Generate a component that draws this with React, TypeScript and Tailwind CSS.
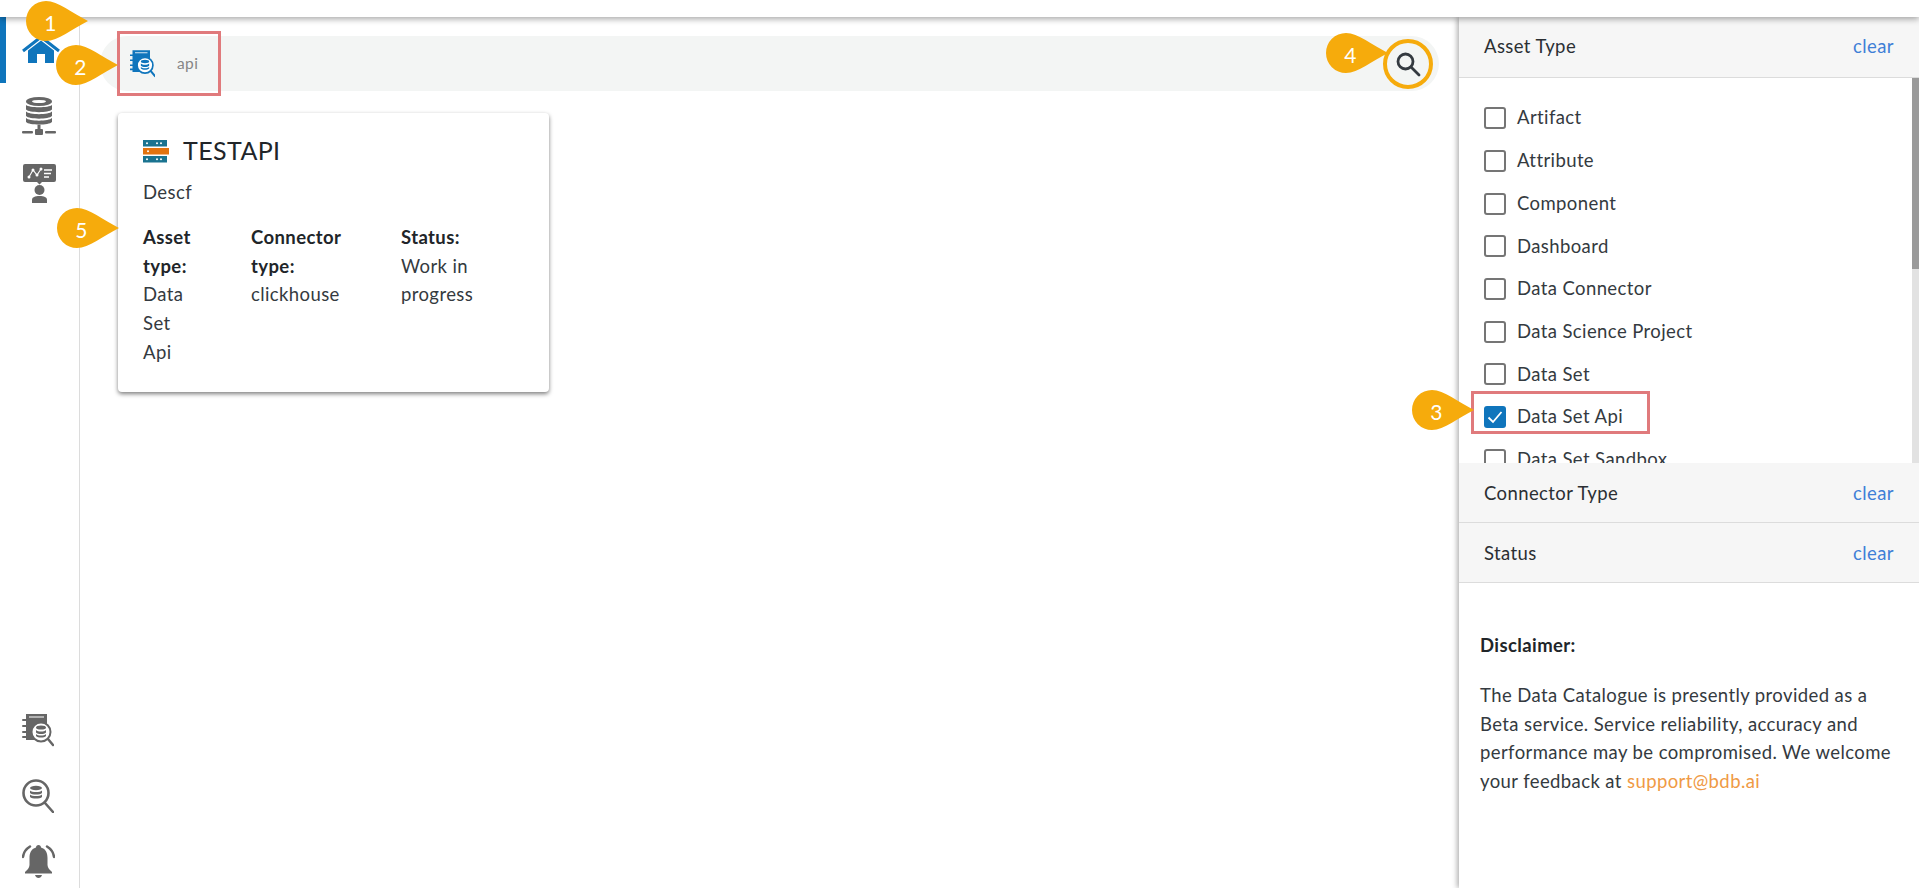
import React from "react";

const font = { fontFamily: '"Lato", "Noto Sans", sans-serif', letterSpacing: "0.4px" };

function Callout({ n, className }: { n: number; className: string }) {
  return (
    <div className={`absolute w-[62px] h-[40px] z-30 ${className}`}>
      <svg width="62" height="40" viewBox="0 0 62 40" className="absolute left-0 top-0">
        <path d="M20 0C32 0 46 12 62 20C46 28 32 40 20 40A20 20 0 0 1 20 0Z" fill="#f6ab0c" />
      </svg>
      <span className="absolute left-0 top-0 w-[49px] h-[42px] flex items-center justify-center text-white text-[21px] leading-none">
        {n}
      </span>
    </div>
  );
}

function Home() {
  return (
    <svg width="38" height="30" viewBox="0 0 38 30">
      <path d="M1 16L19 2L37 16" fill="none" stroke="#0f75bc" strokeWidth="3" />
      <path d="M6 15.500L19 5.500L32 15.500V28H23V19H15V28H6Z" fill="#0f75bc" />
    </svg>
  );
}

function DbServer() {
  return (
    <svg width="34" height="39" viewBox="0 0 34 39" fill="#666">
      <ellipse cx="17" cy="4.500" rx="13" ry="4.500" />
      <ellipse cx="17" cy="4.500" rx="7" ry="1.600" fill="#fff" />
      <path d="M4 8C7 11 27 11 30 8V12.500C27 16 7 16 4 12.500Z" />
      <path d="M4 14.500C7 18 27 18 30 14.500V19C27 22.500 7 22.500 4 19Z" />
      <path d="M4 21C7 24.500 27 24.500 30 21V25C27 28.500 7 28.500 4 25Z" />
      <rect x="15.500" y="28" width="3" height="5" />
      <rect x="13" y="32" width="8" height="6" rx="1" />
      <rect x="0" y="34" width="11" height="2.500" rx="1" />
      <rect x="23" y="34" width="11" height="2.500" rx="1" />
    </svg>
  );
}

function Presenter() {
  return (
    <svg width="33" height="39" viewBox="0 0 33 39" fill="#666">
      <path d="M2 0H31A2 2 0 0 1 33 2V16A2 2 0 0 1 31 18H19L16.500 20.500L14 18H2A2 2 0 0 1 0 16V2A2 2 0 0 1 2 0Z" />
      <path d="M6 13L10 6L14 11L18 5" fill="none" stroke="#fff" strokeWidth="1.100" />
      <g fill="#fff">
        <circle cx="6" cy="13" r="1.500" />
        <circle cx="10" cy="6" r="1.500" />
        <circle cx="14" cy="11" r="1.500" />
        <circle cx="18" cy="5" r="1.500" />
      </g>
      <path d="M21 6H29M21 9.500H28M21 13H26" stroke="#fff" strokeWidth="1.300" />
      <circle cx="16.500" cy="26" r="5" />
      <path d="M9 39V36C9 33 12 32 16.500 32C21 32 24 33 24 36V39Z" />
    </svg>
  );
}

function Catalogue({ c, w, h }: { c: string; w: number; h: number }) {
  return (
    <svg width={w} height={h} viewBox="0 0 30 33">
      <path d="M3 0H24V11A10.500 10.500 0 0 0 13 26H3Z" fill={c} />
      <path d="M6 3H21" stroke="#fff" strokeWidth="1" />
      <path d="M0 6H5M0 12H5M0 18H5M0 23H5" stroke={c} strokeWidth="2" strokeLinecap="round" />
      <circle cx="18" cy="18" r="9.500" fill="#fff" stroke={c} strokeWidth="2" />
      <ellipse cx="18" cy="13.500" rx="5" ry="2" fill={c} />
      <path d="M13 16C15 18 21 18 23 16V18.500C21 20.500 15 20.500 13 18.500ZM13 20C15 22 21 22 23 20V22C21 24 15 24 13 22Z" fill={c} />
      <path d="M25 25L30 31" stroke={c} strokeWidth="2.500" strokeLinecap="round" />
    </svg>
  );
}

function SearchDb() {
  return (
    <svg width="32" height="34" viewBox="0 0 32 34">
      <circle cx="14" cy="14" r="12.500" fill="none" stroke="#666" strokeWidth="2.600" />
      <ellipse cx="14" cy="9" rx="6" ry="2.200" fill="#666" />
      <path d="M8 11.500C10 13.500 18 13.500 20 11.500V14C18 16 10 16 8 14ZM8 15.500C10 17.500 18 17.500 20 15.500V18C18 20 10 20 8 18Z" fill="#666" />
      <path d="M23 24L31 33" stroke="#666" strokeWidth="2.600" strokeLinecap="round" />
    </svg>
  );
}

function Bell() {
  return (
    <svg width="33" height="33" viewBox="0 0 33 33" fill="#666">
      <path d="M16.500 0C18 0 19 1 19 2.500C24 4 25.500 8 25.500 13V20C25.500 23 28 25 30 27V28.500H3V27C5 25 7.500 23 7.500 20V13C7.500 8 9 4 14 2.500C14 1 15 0 16.500 0Z" />
      <path d="M13 30H20C19.500 32 18 33 16.500 33C15 33 13.500 32 13 30Z" />
      <path d="M8 1.500C4 4 1.500 7 1 12M25 1.500C29 4 31.500 7 32 12" fill="none" stroke="#666" strokeWidth="2.500" strokeLinecap="round" />
    </svg>
  );
}

function ServerIcon() {
  return (
    <svg width="26" height="23" viewBox="0 0 26 23" className="shrink-0">
      <rect x="0" y="0" width="24" height="6.500" fill="#1a7390" />
      <rect x="0" y="8" width="26" height="6.500" fill="#e2730f" />
      <rect x="0" y="16" width="24" height="6.500" fill="#1a7390" />
      <g fill="#fff">
        <circle cx="4" cy="3.200" r="1" />
        <circle cx="14" cy="3.200" r="1" />
        <circle cx="18" cy="3.200" r="1" />
        <circle cx="5" cy="11.200" r="1" />
        <circle cx="4" cy="19.200" r="1" />
        <circle cx="14" cy="19.200" r="1" />
        <circle cx="18" cy="19.200" r="1" />
      </g>
    </svg>
  );
}

const items = [
  "Artifact",
  "Attribute",
  "Component",
  "Dashboard",
  "Data Connector",
  "Data Science Project",
  "Data Set",
  "Data Set Api",
  "Data Set Sandbox",
];

function Row({ label }: { label: string }) {
  const on = label === "Data Set Api";
  return (
    <div className="flex items-center h-[42.700px] pl-[25px]">
      {on ? (
        <span className="w-[22px] h-[22px] rounded-[3px] bg-[#0f75bc] flex items-center justify-center shrink-0">
          <svg width="16" height="14" viewBox="0 0 16 14">
            <path d="M1.500 7.500L6 12L14.500 2" fill="none" stroke="#fff" strokeWidth="1.800" />
          </svg>
        </span>
      ) : (
        <span className="w-[22px] h-[22px] rounded-[3px] border-2 border-[#757575] bg-white shrink-0" />
      )}
      <span className="ml-[11px] text-[18.500px] text-[#343a40] whitespace-nowrap">{label}</span>
    </div>
  );
}

function Head({ title, className }: { title: string; className: string }) {
  return (
    <div className={`flex items-center justify-between pl-[25px] pr-[25px] bg-[#f6f6f6] border-b border-[#dcdcdc] shrink-0 ${className}`}>
      <span className="text-[18.500px] text-[#2b2f33]">{title}</span>
      <span className="text-[18.500px] text-[#3f7fd6]">clear</span>
    </div>
  );
}

export default function App() {
  return (
    <div style={font} className="relative w-[1919px] h-[888px] overflow-hidden bg-white flex flex-col">
      <div className="h-[17px] bg-white shrink-0 relative z-20 shadow-[0_2px_6px_rgba(0,0,0,0.35)]" />
      <div className="flex flex-1 min-h-0">
        <aside className="w-[80px] shrink-0 border-r border-[#dcdcdc] flex flex-col justify-between items-start">
          <div className="w-full flex flex-col">
            <div className="h-[66px] w-full border-l-[6px] border-[#0f75bc] flex items-center pl-[16px]">
              <Home />
            </div>
            <div className="pl-[22px] mt-[14px]">
              <DbServer />
            </div>
            <div className="pl-[23px] mt-[28px]">
              <Presenter />
            </div>
          </div>
          <div className="flex flex-col pl-[22px] pb-[10px]">
            <Catalogue c="#666" w={32} h={33} />
            <div className="mt-[32px]">
              <SearchDb />
            </div>
            <div className="mt-[32px]">
              <Bell />
            </div>
          </div>
        </aside>

        <main className="flex-1 min-w-0 pl-[20px] pr-[20px] pt-[19px]">
          <div className="h-[55px] rounded-full bg-[#f3f5f4] flex items-center pl-[30px] pr-[6px]">
            <Catalogue c="#0f75bc" w={25} h={28} />
            <span className="ml-[22px] text-[15.500px] text-[#868686]">api</span>
            <span className="ml-auto w-[50px] h-[50px] rounded-full border-[4px] border-[#f6ab0c] flex items-center justify-center">
              <svg width="26" height="26" viewBox="0 0 26 26">
                <circle cx="10.500" cy="10.500" r="7.500" fill="none" stroke="#343a40" strokeWidth="2.800" />
                <path d="M16 16L24 24" stroke="#343a40" strokeWidth="2.800" strokeLinecap="round" />
              </svg>
            </span>
          </div>

          <div className="ml-[18px] mt-[22px] w-[431px] h-[279px] bg-white rounded-[4px] shadow-[0_2px_4px_rgba(0,0,0,0.5)] pl-[25px] pr-[20px] pt-[26px]">
            <div className="flex items-center h-[24px]">
              <ServerIcon />
              <span className="ml-[14px] text-[25px] text-[#212529]">TESTAPI</span>
            </div>
            <div className="mt-[15px] text-[18.500px] leading-[28.800px] text-[#343a40]">Descf</div>
            <div className="mt-[16px] flex text-[18.500px] leading-[28.800px] text-[#343a40]">
              <div className="w-[108px] pr-[52px]">
                <div className="font-bold text-[#212529]">Asset type:</div>
                <div>Data Set Api</div>
              </div>
              <div className="w-[150px] pr-[30px]">
                <div className="font-bold text-[#212529]">Connector type:</div>
                <div>clickhouse</div>
              </div>
              <div className="w-[110px]">
                <div className="font-bold text-[#212529]">Status:</div>
                <div>Work in progress</div>
              </div>
            </div>
          </div>
        </main>

        <section className="w-[460px] shrink-0 flex flex-col shadow-[-2px_0_5px_rgba(0,0,0,0.3)] relative z-10 bg-white">
          <Head title="Asset Type" className="h-[61px]" />
          <div className="h-[385px] shrink-0 overflow-hidden flex">
            <div className="flex-1 pt-[19px] overflow-hidden">
              {items.map((t) => (
                <Row key={t} label={t} />
              ))}
            </div>
            <div className="w-[7px] bg-[#e2e2e2] h-full">
              <div className="h-[191px] bg-[#9a9a9a]" />
            </div>
          </div>
          <Head title="Connector Type" className="h-[60px] pt-[2px]" />
          <Head title="Status" className="h-[60px] pt-[2px]" />
          <div className="pl-[21px] pr-[16px] pt-[48px] text-[18.500px] leading-[28.800px] text-[#343a40]">
            <div className="font-bold text-[#212529]">Disclaimer:</div>
            <p className="mt-[21px]">
              The Data Catalogue is presently provided as a Beta service. Service reliability, accuracy and
              performance may be compromised. We welcome your feedback at{" "}
              <span className="text-[#ef9a45]">support@bdb.ai</span>
            </p>
          </div>
        </section>
      </div>

      <div className="absolute left-[117px] top-[31px] w-[104px] h-[65px] border-[3px] border-[#e07a7c] z-20" />
      <div className="absolute left-[1471px] top-[391px] w-[179px] h-[43px] border-[3px] border-[#e07a7c] z-20" />
      <Callout n={1} className="left-[26px] top-[1px]" />
      <Callout n={2} className="left-[56px] top-[45px]" />
      <Callout n={3} className="left-[1412px] top-[390px]" />
      <Callout n={4} className="left-[1326px] top-[33px]" />
      <Callout n={5} className="left-[57px] top-[208px]" />
    </div>
  );
}
